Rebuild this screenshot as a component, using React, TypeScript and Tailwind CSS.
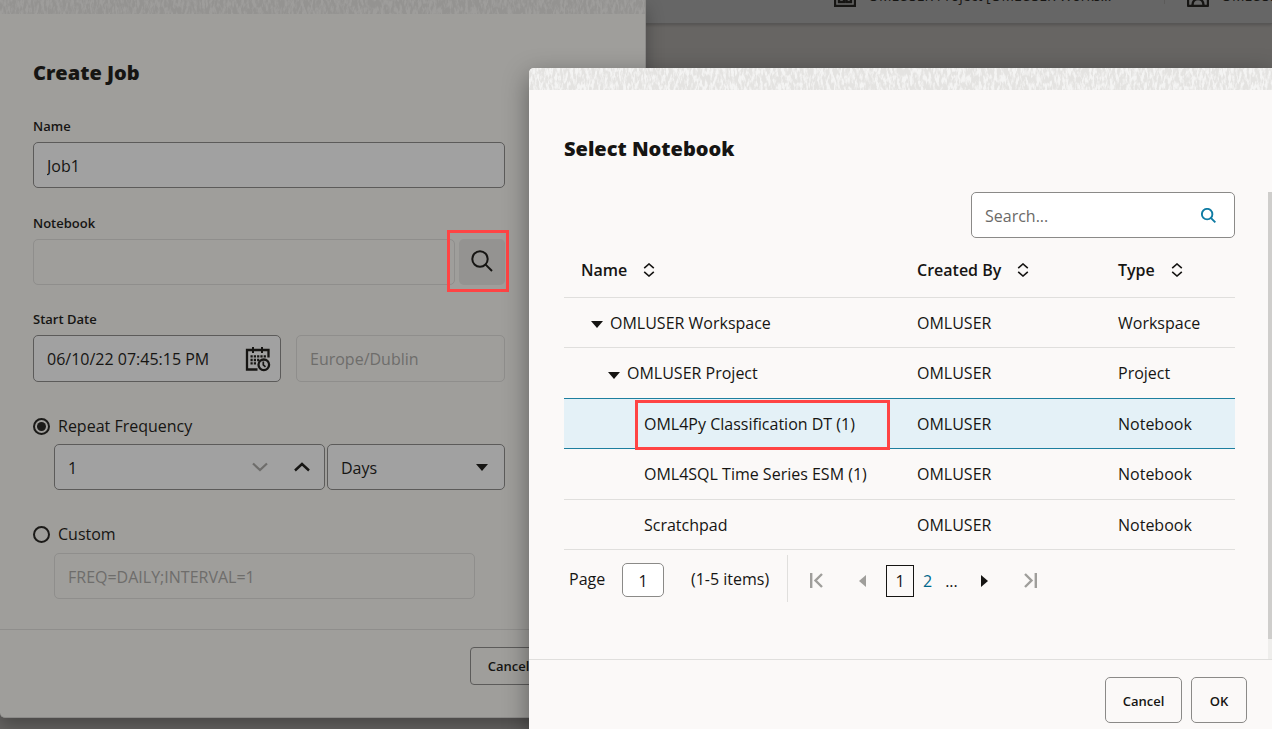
import React from "react";

type Row = { name: string; level: number; createdBy: string; type: string; selected?: boolean };

const rows: Row[] = [
  { name: "OMLUSER Workspace", level: 0, createdBy: "OMLUSER", type: "Workspace" },
  { name: "OMLUSER Project", level: 1, createdBy: "OMLUSER", type: "Project" },
  { name: "OML4Py Classification DT (1)", level: 2, createdBy: "OMLUSER", type: "Notebook", selected: true },
  { name: "OML4SQL Time Series ESM (1)", level: 2, createdBy: "OMLUSER", type: "Notebook" },
  { name: "Scratchpad", level: 2, createdBy: "OMLUSER", type: "Notebook" },
];

const indent = ["pl-[27px]", "pl-[44px]", "pl-[80px]"];

function Texture({ id, className }: { id: string; className: string }) {
  return (
    <svg className={className} aria-hidden="true" preserveAspectRatio="none">
      <filter id={id} x="0" y="0" width="100%" height="100%">
        <feTurbulence type="fractalNoise" baseFrequency="0.38 0.13" numOctaves="3" seed="7" />
        <feColorMatrix values="0 0 0 0 1  0 0 0 0 1  0 0 0 0 1  4 0 0 0 -1.6" />
        <feComposite operator="in" in2="SourceGraphic" />
      </filter>
      <rect width="100%" height="100%" filter={`url(#${id})`} opacity="0.6" />
    </svg>
  );
}

function Magnifier({ className, stroke }: { className: string; stroke: number }) {
  return (
    <svg viewBox="0 0 22 22" className={className} fill="none" stroke="currentColor" strokeWidth={stroke} aria-hidden="true">
      <circle cx="9" cy="9" r="7.7" />
      <path d="M14.4 14.4L21 21" />
    </svg>
  );
}

function CalendarClock() {
  return (
    <svg viewBox="0 0 26 26" className="h-[26px] w-[26px]" fill="none" stroke="currentColor" aria-hidden="true">
      <path d="M23.5 11.5V4H2v19.5h10.5" strokeWidth="2.3" />
      <path d="M8 1v6M17 1v6" strokeWidth="2" />
      <path d="M5.5 10.4h15.5M5.5 14h9M5.5 17.4h5.5" strokeWidth="2.3" strokeDasharray="2.2 1.1" />
      <circle cx="18.8" cy="18.8" r="5.3" strokeWidth="2.3" />
      <path d="M18.3 15.5v3.4l2.2 2" strokeWidth="1.7" />
    </svg>
  );
}

function Caret({ className }: { className: string }) {
  return (
    <svg viewBox="0 0 12 7" className={className} fill="currentColor" aria-hidden="true">
      <path d="M0 0h12L6 7z" />
    </svg>
  );
}

function SortIcon() {
  return (
    <svg viewBox="0 0 12 14" className="h-[14px] w-3" fill="none" stroke="currentColor" strokeWidth="1.6" aria-hidden="true">
      <path d="M1.2 5.2L6 1l4.8 4.2M1.2 8.8L6 13l4.8-4.2" />
    </svg>
  );
}

function SortHeader({ label, className }: { label: string; className: string }) {
  return (
    <th scope="col" className={`${className} h-[58px] border-b border-[#e0dfdd] pt-0.5 text-left font-semibold`}>
      <button type="button" className="flex items-center gap-4">
        {label}
        <SortIcon />
      </button>
    </th>
  );
}

const field = "h-[46px] rounded-[5px] border px-[13px] pt-0.5";
const active = "border-[#5c5b5a] bg-[#a1a1a1]";
const disabled = "border-[#8f8e8c] bg-transparent placeholder:text-[#6e6d6b] placeholder:opacity-100";
const caption = "block text-[13px] leading-4 font-semibold";
const radio = "h-[17px] w-[17px] appearance-none rounded-full border-2 border-[#1b1a18] bg-clip-content p-[2px] checked:bg-[#1b1a18]";

function CreateJob() {
  return (
    <section
      aria-labelledby="create-title"
      className="absolute top-0 left-0 w-[646px] rounded-b-[5px] border-r border-b border-[#8b8a88] bg-[#9f9e9b] shadow-[0_8px_18px_rgba(0,0,0,0.3)]"
    >
      <div className="h-[14px] bg-[#949391]">
        <Texture id="weave-dark" className="block h-full w-full opacity-15" />
      </div>
      <div className="w-[505px] pt-[45px] pb-[30px] pl-[33px]">
        <h2 id="create-title" className="text-[20px] leading-7 font-extrabold">Create Job</h2>

        <label htmlFor="name" className={`${caption} mt-[31px]`}>Name</label>
        <input id="name" defaultValue="Job1" className={`${field} ${active} mt-2 w-full`} />

        <label htmlFor="notebook" className={`${caption} mt-[27px]`}>Notebook</label>
        <div className="mt-2 flex gap-1">
          <input id="notebook" readOnly className={`${field} ${disabled} min-w-0 flex-1`} />
          <div className="relative">
            <button type="button" aria-label="Find notebook" className="flex h-[46px] w-[46px] items-center justify-center rounded-[5px] bg-[#949391] pr-px pb-0.5">
              <Magnifier className="h-[22px] w-[22px]" stroke={2} />
            </button>
            <span className="pointer-events-none absolute -top-[9px] -left-3 h-[62px] w-[62px] border-[3px] border-[#ff4444]" />
          </div>
        </div>

        <label htmlFor="start" className={`${caption} mt-[26px]`}>Start Date</label>
        <div className="mt-2 flex gap-[15px]">
          <div className="flex h-[47px] w-[248px] items-center rounded-[5px] border border-[#5c5b5a] bg-[#a1a1a1] pr-[9px] pl-[13px]">
            <input id="start" defaultValue="06/10/22 07:45:15 PM" className="min-w-0 flex-1 bg-transparent" />
            <button type="button" aria-label="Choose date"><CalendarClock /></button>
          </div>
          <input aria-label="Time zone" disabled placeholder="Europe/Dublin" className="h-[47px] min-w-0 flex-1 rounded-[5px] border border-[#8f8e8c] px-[13px] placeholder:text-[#6e6d6b]" />
        </div>

        <label className="mt-8 flex h-6 items-center gap-2">
          <input type="radio" name="mode" defaultChecked className={radio} />
          Repeat Frequency
        </label>
        <div className="mt-1.5 flex gap-0.5 pl-[21px]">
          <div className="flex h-[46px] min-w-0 flex-1 items-center rounded-[5px] border border-[#5c5b5a] bg-[#a1a1a1] pr-3.5 pl-[13px]">
            <input aria-label="Interval" defaultValue="1" className="min-w-0 flex-1 bg-transparent pt-0.5" />
            <button type="button" aria-label="Decrease" className="mr-[26px] text-[#6e6d6b]">
              <svg viewBox="0 0 16 10" className="h-2.5 w-4" fill="none" stroke="currentColor" strokeWidth="2.2"><path d="M1 1.5l7 6.5 7-6.5" /></svg>
            </button>
            <button type="button" aria-label="Increase">
              <svg viewBox="0 0 16 10" className="h-2.5 w-4" fill="none" stroke="currentColor" strokeWidth="2.4"><path d="M1 8.5L8 2l7 6.5" /></svg>
            </button>
          </div>
          <div className="relative w-[178px]">
            <select aria-label="Unit" className={`${field} ${active} w-full appearance-none`}>
              <option>Days</option>
            </select>
            <Caret className="pointer-events-none absolute top-5 right-[17px] h-[7px] w-3" />
          </div>
        </div>

        <label className="mt-8 flex h-6 items-center gap-2">
          <input type="radio" name="mode" className={radio} />
          Custom
        </label>
        <div className="mt-[7px] pr-[30px] pl-[21px]">
          <input aria-label="Custom frequency" disabled placeholder="FREQ=DAILY;INTERVAL=1" className={`${field} ${disabled} w-full`} />
        </div>
      </div>
      <footer className="flex justify-end gap-2 border-t border-[#8f8e8c] pt-[17px] pr-5 pb-8">
        <button type="button" className="h-[38px] w-[77px] rounded-[4px] border border-[#5c5b5a] text-[13px] font-semibold">Cancel</button>
        <button type="button" className="h-[38px] w-[70px] rounded-[4px] border border-[#5c5b5a] text-[13px] font-semibold">OK</button>
      </footer>
    </section>
  );
}

function Pager() {
  return (
    <nav aria-label="Pages" className="flex items-center pt-[5px] pl-[5px]">
      <label htmlFor="page" className="w-[53px]">Page</label>
      <input id="page" defaultValue="1" className="mt-0.5 h-[34px] w-[42px] rounded-[5px] border border-[#8b8a88] bg-white pt-0.5 text-center" />
      <span className="ml-[27px] w-24">(1-5 items)</span>
      <div className="flex h-[47px] items-center border-l border-[#e0dfdd] pt-1 pl-[22px]">
        <button type="button" aria-label="First page" className="text-[#9f9e9b]">
          <svg viewBox="0 0 13 15" className="h-[15px] w-[13px]" fill="none" stroke="currentColor" strokeWidth="2.4"><path d="M1.2 0v15M12 1L5.5 7.5 12 14" /></svg>
        </button>
        <button type="button" aria-label="Previous page" className="ml-9 text-[#9f9e9b]">
          <svg viewBox="0 0 7 12" className="h-3 w-[7px]" fill="currentColor"><path d="M7 0v12L0 6z" /></svg>
        </button>
        <button type="button" className="ml-5 h-8 w-7 border border-[#161513]">1</button>
        <button type="button" className="ml-[9px] text-[#00688c]">2</button>
        <span className="ml-[13px] w-9">...</span>
        <button type="button" aria-label="Next page">
          <svg viewBox="0 0 7 12" className="h-3 w-[7px]" fill="currentColor"><path d="M0 0v12l7-6z" /></svg>
        </button>
        <button type="button" aria-label="Last page" className="ml-9 text-[#9f9e9b]">
          <svg viewBox="0 0 13 15" className="h-[15px] w-[13px]" fill="none" stroke="currentColor" strokeWidth="2.4"><path d="M11.8 0v15M1 1l6.5 6.5L1 14" /></svg>
        </button>
      </div>
    </nav>
  );
}

function SelectNotebook() {
  return (
    <section
      aria-labelledby="select-title"
      className="absolute top-[68px] right-0 bottom-0 left-[529px] flex flex-col overflow-hidden rounded-tl-[5px] bg-[#fbf9f8]"
    >
      <div className="h-[22px] shrink-0 bg-[#e4e3e1]">
        <Texture id="weave-light" className="block h-full w-full" />
      </div>
      <h2 id="select-title" className="pt-[45px] pl-[35px] text-[20px] leading-7 font-extrabold">Select Notebook</h2>
      <div className="mt-[29px] flex min-h-0 flex-1">
        <div className="min-w-0 flex-1 pr-[33px] pl-[35px]">
          <div className="ml-auto flex h-[46px] w-[264px] items-center rounded-[5px] border border-[#8b8a88] bg-white pr-[18px] pl-[13px]">
            <input type="search" aria-label="Search" placeholder="Search..." className="min-w-0 flex-1 bg-transparent pt-0.5 placeholder:text-[#6b6a68]" />
            <button type="button" aria-label="Search notebooks" className="text-[#0f7ba3]">
              <Magnifier className="h-[15px] w-[15px]" stroke={2.8} />
            </button>
          </div>
          <table className="mt-0.5 w-full table-fixed border-separate border-spacing-0">
            <thead>
              <tr>
                <SortHeader label="Name" className="pl-[17px]" />
                <SortHeader label="Created By" className="w-[201px]" />
                <SortHeader label="Type" className="w-[117px]" />
              </tr>
            </thead>
            <tbody>
              {rows.map((row, i) => {
                const line = row.selected || rows[i + 1]?.selected ? "border-[#1d7f9f]" : "border-[#e0dfdd]";
                const cell = `border-b ${line} p-0`;
                return (
                  <tr key={row.name} className={`h-[50px] even:h-[51px] ${row.selected ? "bg-[#e4f1f7]" : ""}`}>
                    <td className={`border-b ${line} ${indent[row.level]}`}>
                      <div className="relative flex items-center gap-[7px]">
                        {row.level < 2 && (
                          <button type="button" aria-label={`Collapse ${row.name}`} className="pt-1">
                            <Caret className="h-[7px] w-3" />
                          </button>
                        )}
                        {row.name}
                        {row.selected && (
                          <span className="pointer-events-none absolute -top-3 -left-[9px] h-[50px] w-[255px] border-[3px] border-[#ff4444]" />
                        )}
                      </div>
                    </td>
                    <td className={cell}>{row.createdBy}</td>
                    <td className={cell}>{row.type}</td>
                  </tr>
                );
              })}
            </tbody>
          </table>
          <Pager />
        </div>
        <div className="flex w-1 bg-[#efeeec] pb-5">
          <div className="flex-1 bg-[#cfcecc]" />
        </div>
      </div>
      <footer className="flex shrink-0 justify-end gap-[9px] border-t border-[#e0dfdd] pt-[17px] pr-[25px] pb-1.5">
        <button type="button" className="h-[46px] w-[77px] rounded-[5px] border border-[#8b8a88] pt-0.5 text-[13px] font-semibold">Cancel</button>
        <button type="button" className="h-[46px] w-14 rounded-[5px] border border-[#8b8a88] pt-0.5 text-[13px] font-semibold">OK</button>
      </footer>
    </section>
  );
}

export default function App() {
  return (
    <main className="relative h-screen min-h-[729px] overflow-hidden bg-[#676563] font-['Open_Sans','Noto_Sans',sans-serif] text-[16px] leading-6 text-[#161513]">
      <header className="flex h-6 items-end justify-end overflow-hidden border-b border-[#575655] bg-[#666666] shadow-[0_1px_3px_rgba(0,0,0,0.2)]">
        <div className="flex h-[55px] shrink-0 items-center text-[14px] font-medium">
          <svg viewBox="0 0 22 22" className="mr-3 h-[22px] w-[22px]" fill="none" stroke="currentColor" strokeWidth="2.4" aria-hidden="true">
            <path d="M1 1h20v20H1zM5 5h5v4H5zM12.5 5H17v4h-4.5zM5 13h5v4H5zM12.5 13H17v4h-4.5z" />
          </svg>
          <span className="w-[296px]">OMLUSER Project [OMLUSER Works...</span>
          <span className="h-4 w-[23px] border-l border-[#5c5b5a]" />
          <svg viewBox="0 0 22 22" className="mr-3 h-[22px] w-[22px]" fill="none" stroke="currentColor" strokeWidth="2.4" aria-hidden="true">
            <rect x="1" y="1" width="20" height="20" rx="1" />
            <circle cx="11" cy="9" r="3.5" />
            <path d="M5.5 20c0-8 11-8 11 0" />
          </svg>
          <span className="w-[51px] overflow-hidden whitespace-nowrap">OMLUSER</span>
        </div>
      </header>
      <CreateJob />
      <div className="absolute top-[68px] right-0 bottom-0 left-[529px] rounded-tl-[5px] shadow-[0_8px_26px_rgba(0,0,0,0.4)]" />
      <SelectNotebook />
    </main>
  );
}
